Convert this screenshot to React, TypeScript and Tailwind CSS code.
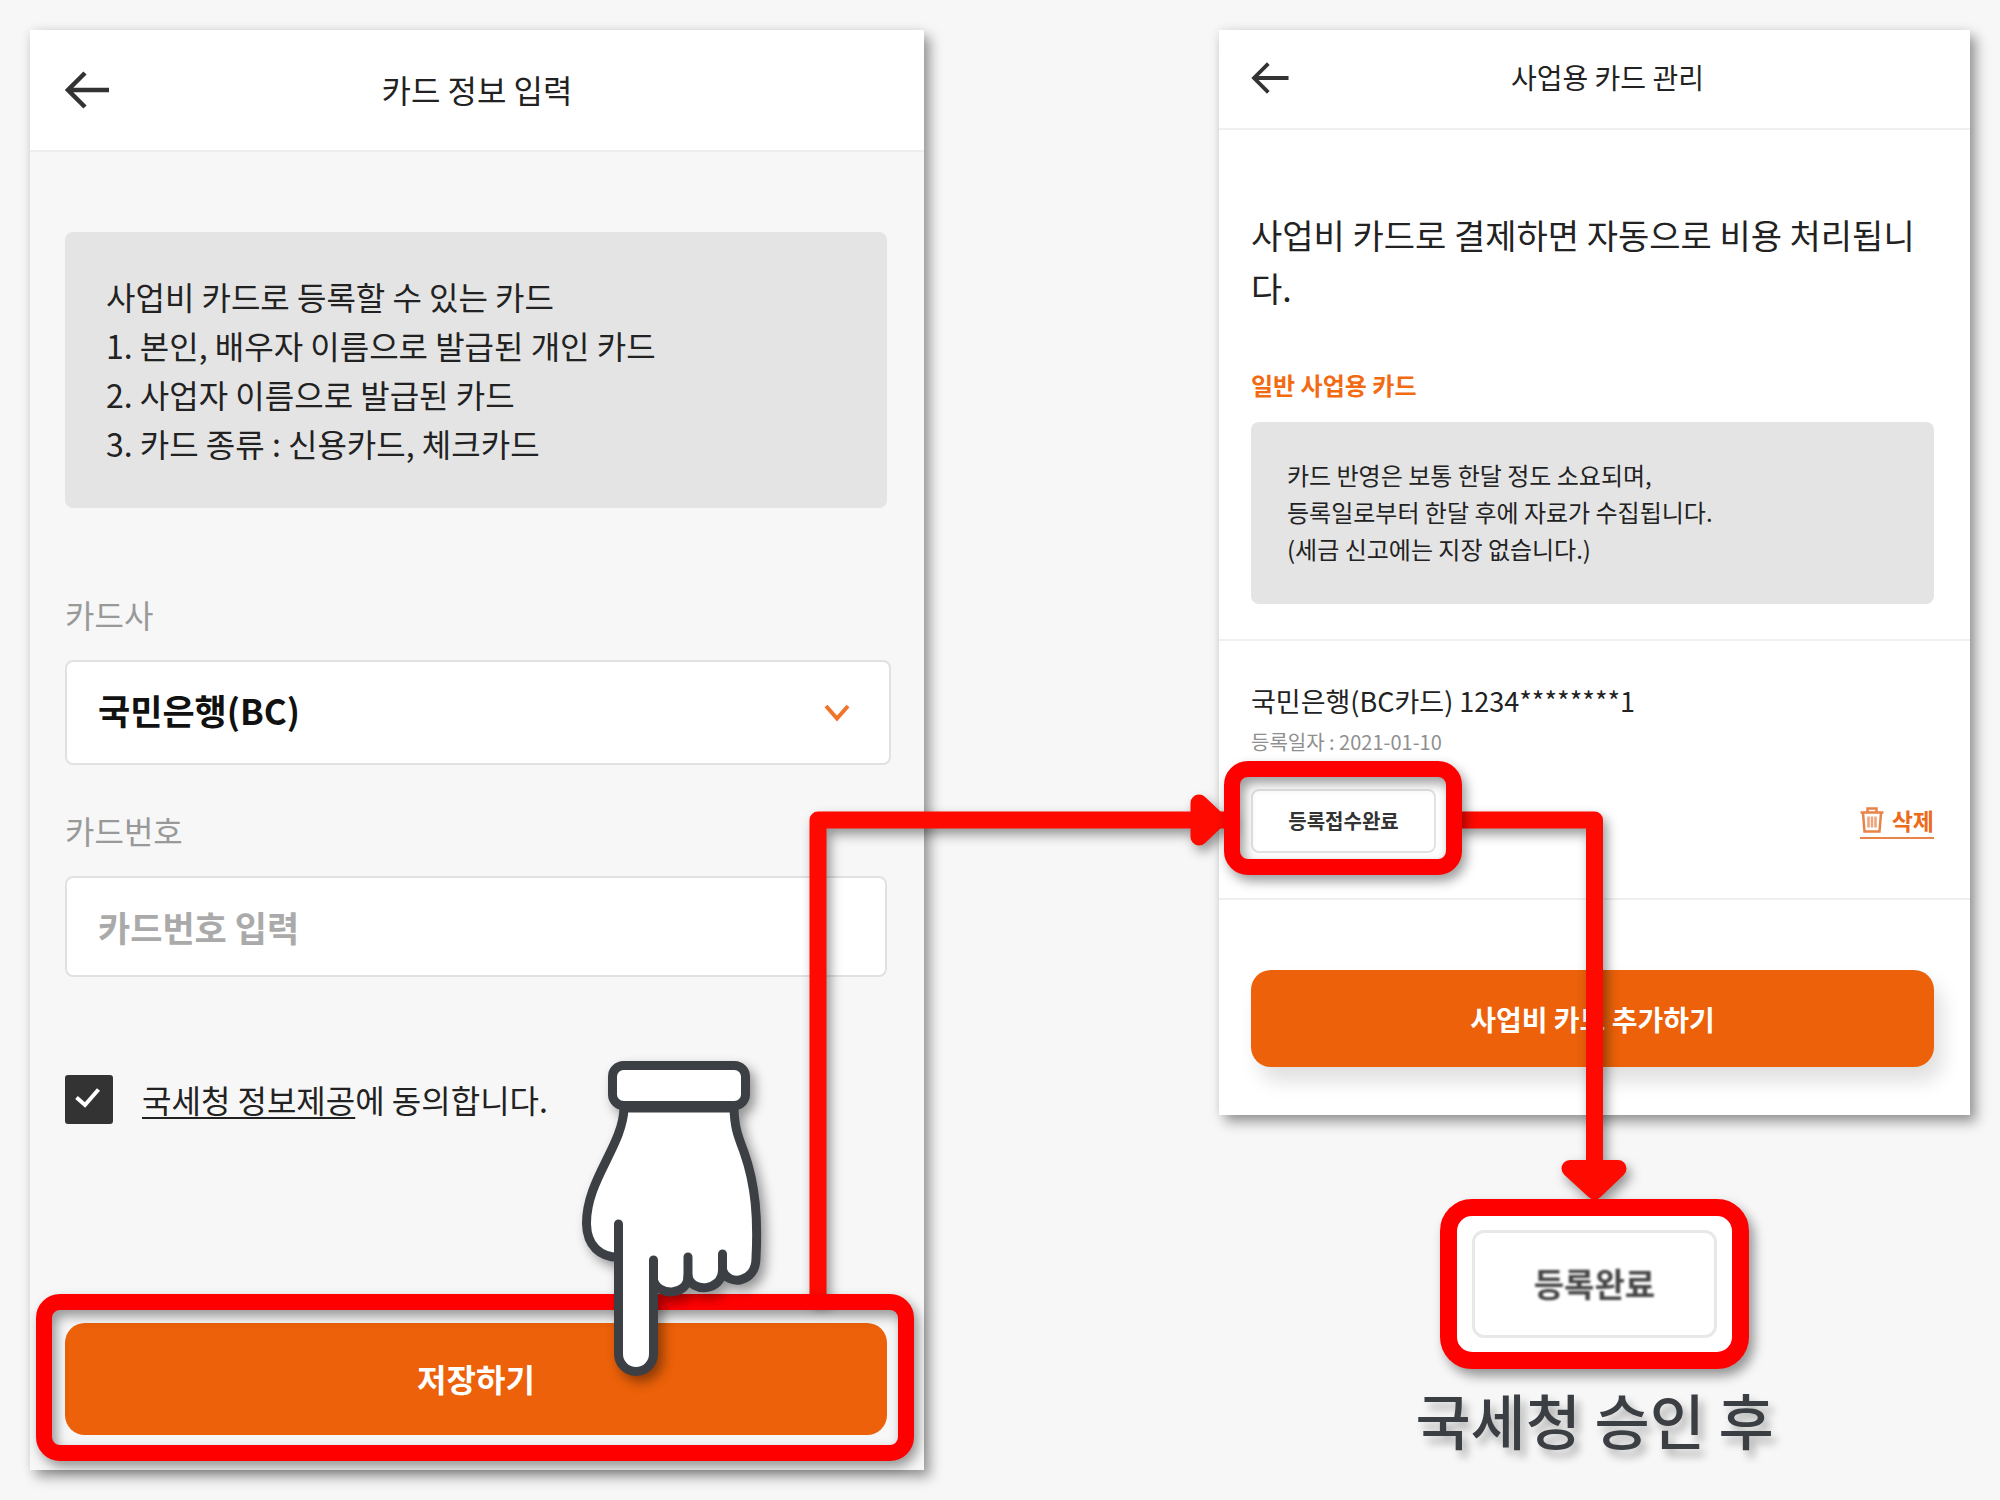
import type { ReactNode } from "react";

function BackArrow({ className }: { className: string }) {
  return (
    <svg viewBox="0 0 44 38" className={className} fill="none" stroke="#333" strokeWidth="4.500">
      <path d="M20 2 L3 19 L20 36 M3 19 H44" />
    </svg>
  );
}

function Chevron() {
  return (
    <svg
      viewBox="0 0 26 18"
      className="pointer-events-none absolute top-1/2 right-[41px] h-[18px] w-[26px] -translate-y-1/2"
      fill="none"
      stroke="#f0742a"
      strokeWidth="4"
    >
      <path d="M2 2 L13 14.500 L24 2" />
    </svg>
  );
}

function TrashIcon() {
  return (
    <svg viewBox="0 0 24 26" className="h-[26px] w-6" fill="none" stroke="#e8834a" strokeWidth="2.500">
      <path d="M0.500 5.500 H23.500 M7.500 5 V1.500 H16.500 V5" />
      <path d="M3 6 L4.500 24.500 H19.500 L21 6" />
      <path d="M8.500 9.500 V20.500 M12 9.500 V20.500 M15.500 9.500 V20.500" stroke="#eda27a" />
    </svg>
  );
}

function Highlight({ className, children }: { className: string; children?: ReactNode }) {
  return (
    <span
      className={`pointer-events-none absolute z-10 rounded-[24px] border-16 border-[#ff0000] drop-shadow-[4px_6px_6px_rgba(0,0,0,0.4)] ${className}`}
    >
      {children}
    </span>
  );
}

function CardForm() {
  return (
    <section className="bg-[#f7f7f7] shadow-[6px_7px_12px_rgba(0,0,0,0.38),0_0_10px_rgba(0,0,0,0.08)]">
      <header className="flex h-[122px] items-center border-b-2 border-[#eee] bg-white px-[35px]">
        <button type="button" aria-label="뒤로" className="w-11">
          <BackArrow className="h-[38px] w-11" />
        </button>
        <h1 className="flex-1 pr-11 pb-0.5 text-center text-[32px] leading-[48px]">카드 정보 입력</h1>
      </header>
      <form className="pt-20 pr-[37px] pb-[35px] pl-[35px]" onSubmit={(e) => e.preventDefault()}>
        <div className="rounded-lg bg-[#e4e4e4] px-[41px] py-10 text-[32px] leading-[49px]">
          <p>사업비 카드로 등록할 수 있는 카드</p>
          <p>1. 본인, 배우자 이름으로 발급된 개인 카드</p>
          <p>2. 사업자 이름으로 발급된 카드</p>
          <p>3. 카드 종류 : 신용카드, 체크카드</p>
        </div>

        <label htmlFor="issuer" className="mt-[82px] block text-[32px] leading-[48px] text-[#999]">
          카드사
        </label>
        <div className="relative mt-[22px] -mr-1">
          <select
            id="issuer"
            defaultValue="bc"
            className="h-[105px] w-full appearance-none rounded-lg border-2 border-[#e0e1e3] bg-white px-[31px] pb-1 text-[35px] font-bold text-[#111]"
          >
            <option value="bc">국민은행(BC)</option>
          </select>
          <Chevron />
        </div>

        <label htmlFor="number" className="mt-[41px] block text-[32px] leading-[48px] text-[#999]">
          카드번호
        </label>
        <input
          id="number"
          type="text"
          placeholder="카드번호 입력"
          className="mt-[22px] block h-[101px] w-full rounded-lg border-2 border-[#e0e1e3] bg-white px-[31px] text-[35px] font-bold placeholder:text-[#aaa]"
        />

        <div className="mt-[98px] flex h-[49px] items-center gap-[29px]">
          <div className="relative h-[49px] w-12">
            <input
              id="agree"
              type="checkbox"
              defaultChecked
              className="block h-full w-full appearance-none rounded-[3px] border-2 border-[#333] bg-white checked:bg-[#333]"
            />
            <svg
              viewBox="0 0 48 49"
              className="pointer-events-none absolute inset-0 h-full w-full"
              fill="none"
              stroke="#fff"
              strokeWidth="4"
            >
              <path d="M11.500 22.500 L20 30 L33.500 14.500" />
            </svg>
          </div>
          <label htmlFor="agree" className="pb-0.5 text-[32px] leading-[48px]">
            <a href="#terms" className="underline decoration-2 underline-offset-4">
              국세청 정보제공
            </a>
            에 동의합니다.
          </label>
        </div>

        <div className="relative mt-[199px]">
          <button
            type="submit"
            className="block h-28 w-full rounded-[20px] bg-[#ec6109] pb-0.5 text-[32px] font-bold text-white"
          >
            저장하기
          </button>
          <Highlight className="-top-[29px] -right-[27px] -bottom-[26px] -left-[29px]" />
        </div>
      </form>
    </section>
  );
}

function CardList() {
  return (
    <section className="w-full bg-white shadow-[6px_7px_12px_rgba(0,0,0,0.38),0_0_10px_rgba(0,0,0,0.08)]">
      <header className="flex h-[100px] items-center border-b-2 border-[#f0f0f0] px-8 pb-0.5">
        <button type="button" aria-label="뒤로" className="w-[38px]">
          <BackArrow className="h-8 w-[38px]" />
        </button>
        <h1 className="flex-1 pr-3 pb-0.5 text-center text-[28px] leading-10">사업용 카드 관리</h1>
      </header>
      <div className="pt-[78px] pr-9 pb-[35px] pl-8">
        <p className="text-[34px] leading-[53px]">사업비 카드로 결제하면 자동으로 비용 처리됩니다.</p>
        <h2 className="mt-[53px] text-[24px] leading-9 font-bold text-[#f26a12]">일반 사업용 카드</h2>
        <div className="mt-[19px] rounded-lg bg-[#e4e4e4] px-9 pt-[34px] pb-[37px] text-[24px] leading-[37px]">
          <p>카드 반영은 보통 한달 정도 소요되며,</p>
          <p>등록일로부터 한달 후에 자료가 수집됩니다.</p>
          <p>(세금 신고에는 지장 없습니다.)</p>
        </div>
      </div>
      <div className="border-y-2 border-[#efefef] pt-10 pr-9 pb-[45px] pl-8">
        <p className="text-[27px] leading-10">국민은행(BC카드) 1234********1</p>
        <p className="mt-[6px] text-[20px] leading-[30px] text-[#8f8f8f]">등록일자 : 2021-01-10</p>
        <div className="mt-8 flex items-center justify-between">
          <div className="relative">
            <button
              type="button"
              className="block h-16 w-[185px] rounded-lg border-2 border-[#e2e2e2] bg-white text-[20px] font-bold text-[#333]"
            >
              등록접수완료
            </button>
            <Highlight className="-top-7 -right-[26px] -bottom-[22px] -left-[27px]" />
          </div>
          <button
            type="button"
            className="flex items-center gap-2 border-b-2 border-[#e8834a] text-[23px] leading-[34px] font-bold text-[#ec6a1a]"
          >
            <TrashIcon />
            삭제
          </button>
        </div>
      </div>
      <div className="pt-[70px] pr-9 pb-12 pl-8">
        <button
          type="button"
          className="block h-[97px] w-full rounded-[20px] bg-[#ec6109] text-[28px] font-bold text-white shadow-[8px_14px_20px_rgba(0,0,0,0.13)]"
        >
          사업비 카드 추가하기
        </button>
      </div>
    </section>
  );
}

function FlowArrows() {
  return (
    <svg
      viewBox="0 0 2000 1500"
      aria-hidden="true"
      className="pointer-events-none absolute top-0 left-0 w-full drop-shadow-[4px_6px_6px_rgba(0,0,0,0.4)]"
      fill="none"
      stroke="#ff0a00"
      strokeWidth="17"
      strokeLinejoin="round"
    >
      <path d="M818 1302 V820 H1232" />
      <path d="M1199 803 L1217 820 L1199 837 Z" fill="#ff0a00" />
      <path d="M1456 820 H1594.500 V1168" />
      <path d="M1570 1168.500 H1618 L1594.500 1191 Z" fill="#ff0a00" />
    </svg>
  );
}

function PointingHand() {
  return (
    <svg
      viewBox="0 0 2000 1500"
      aria-hidden="true"
      className="pointer-events-none absolute top-0 left-0 z-20 w-full drop-shadow-[5px_6px_6px_rgba(0,0,0,0.4)]"
      fill="#fff"
      stroke="#3c4045"
      strokeWidth="9"
      strokeLinecap="round"
      strokeLinejoin="round"
    >
      <path d="M624 1108 C623 1146 586 1180 586.500 1224 C587 1246 600 1257 618.500 1257.500 V1354 A17.500 17.500 0 0 0 653.500 1354 V1280 C657 1296 688 1297 688 1276 C691 1293 722 1292 722.500 1270 C727 1286 756 1284 756 1258 C758 1220 756 1186 744 1152 C738 1136 734.500 1128 734 1108 Z" />
      <path d="M618.500 1224 V1258 M653.500 1260 V1284 M688 1257 V1278 M722.500 1254 V1272" />
      <rect x="612.500" y="1065.500" width="133" height="40" rx="11" />
    </svg>
  );
}

export default function App() {
  return (
    <main className="relative min-h-screen overflow-hidden bg-[#f7f7f7] p-[30px] font-['Noto_Sans_CJK_KR',sans-serif] text-[#222]">
      <div className="grid grid-cols-[894fr_751fr] items-start gap-x-[295px]">
        <CardForm />
        <div className="flex flex-col items-center">
          <CardList />
          <figure className="mt-[84px] flex flex-col items-center">
            <div className="relative z-10 rounded-[32px] border-17 border-[#ff0000] bg-white px-[15px] py-[14px] shadow-[5px_7px_12px_rgba(0,0,0,0.4)]">
              <button
                type="button"
                className="block h-[108px] w-[245px] rounded-xl border-3 border-[#e8e8e8] text-[33px] font-bold text-[#444]"
              >
                <span className="blur-[1px]">등록완료</span>
              </button>
            </div>
            <figcaption className="mt-2 text-[60px] leading-[84px] font-medium text-[#3b3f44] [text-shadow:5px_7px_8px_rgba(0,0,0,0.3)]">
              국세청 승인 후
            </figcaption>
          </figure>
        </div>
      </div>
      <FlowArrows />
      <PointingHand />
    </main>
  );
}
